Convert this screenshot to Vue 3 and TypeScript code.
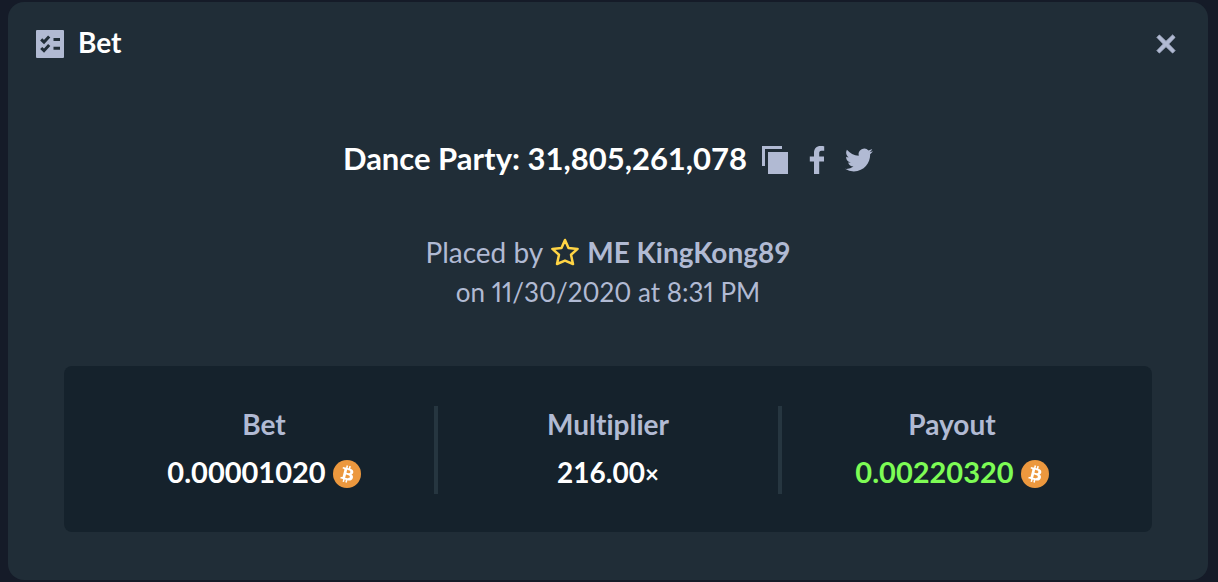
<script setup lang="ts">
interface Stat {
  label: string
  value: string
  unit?: string
  coin: boolean
  win?: boolean
}

const stats: Stat[] = [
  { label: 'Bet', value: '0.00001020', coin: true },
  { label: 'Multiplier', value: '216.00', unit: '×', coin: false },
  { label: 'Payout', value: '0.00220320', coin: true, win: true },
]
</script>

<template>
  <div class="backdrop">
    <main class="modal" role="dialog" aria-labelledby="modal-title">
      <header class="head">
        <svg class="icon" viewBox="0 0 28 28" aria-hidden="true">
          <rect width="28" height="28" rx="1" fill="currentColor" />
          <path class="tick" d="M5.2 9.3 8 12 13.2 6.4M5.2 18 8 20.7 13.2 15.1" />
          <path class="dash" d="M17.5 9.5H24M17.5 18.3H24" />
        </svg>
        <h1 id="modal-title">Bet</h1>
        <button class="icon-button close" type="button" aria-label="Close">
          <svg class="icon" viewBox="0 0 28 28" aria-hidden="true">
            <path class="cross" d="M5 7.4 7.4 5 14 11.4 20.6 5 23 7.4 16.6 14 23 20.6 20.6 23 14 16.6 7.4 23 5 20.6 11.4 14Z" />
          </svg>
        </button>
      </header>

      <section class="game">
        <h2>Dance Party: 31,805,261,078</h2>
        <button class="icon-button" type="button" aria-label="Copy bet">
          <svg class="icon" viewBox="0 0 28 28" aria-hidden="true">
            <path fill="currentColor" d="M1 0H21V3H4V20H1ZM7 6H27V28H7Z" />
          </svg>
        </button>
        <button class="icon-button" type="button" aria-label="Share on Facebook">
          <svg class="icon" viewBox="0 0 28 28" aria-hidden="true">
            <path fill="currentColor" d="M11 28V15.5H6.8V10.4H11V6.8C11 2.4 13.6 0 17.5 0 19.2 0 20.8.2 21.2.3V4.8H18.6C16.6 4.8 16.2 5.8 16.2 7.2V10.4H21V15.5H16.2V28Z" />
          </svg>
        </button>
        <button class="icon-button" type="button" aria-label="Share on Twitter">
          <svg class="icon" viewBox="0 0 24 24" aria-hidden="true">
            <path fill="currentColor" d="M23.95 4.57a10 10 0 0 1-2.82.77 4.96 4.96 0 0 0 2.16-2.72c-.95.55-2 .95-3.13 1.18a4.92 4.92 0 0 0-8.38 4.48C7.69 8.09 4.07 6.13 1.64 3.16a4.82 4.82 0 0 0-.67 2.48c0 1.71.87 3.21 2.19 4.1a4.9 4.9 0 0 1-2.23-.62v.06a4.92 4.92 0 0 0 3.95 4.83 5 5 0 0 1-2.21.08 4.94 4.94 0 0 0 4.6 3.42A9.87 9.87 0 0 1 0 19.54a13.99 13.99 0 0 0 7.55 2.21c9.05 0 14-7.5 14-13.98 0-.21 0-.42-.02-.63a9.94 9.94 0 0 0 2.46-2.55z" />
          </svg>
        </button>
      </section>

      <section class="placed">
        <p>
          Placed by
          <svg class="icon" viewBox="0 0 28 28" aria-hidden="true">
            <path class="star" d="M14 2 17.5 9.9 26.6 10.9 20 16.7 22 26 14 22.6 6 26 8 16.7 1.4 10.9 10.5 9.9Z" />
          </svg>
          <strong>ME KingKong89</strong>
        </p>
        <p class="date">on 11/30/2020 at 8:31 PM</p>
      </section>

      <dl class="stats">
        <div v-for="stat in stats" :key="stat.label" class="stat">
          <dt>{{ stat.label }}</dt>
          <dd :class="{ win: stat.win }">
            <span class="value" :class="{ multiplier: stat.unit }">{{ stat.value }}<span v-if="stat.unit" class="unit">{{ stat.unit }}</span></span>
            <svg v-if="stat.coin" class="icon" viewBox="0 0 32 32" aria-label="BTC">
              <circle cx="16" cy="16" r="16" fill="#ec983e" />
              <path fill="#fff" d="M23.189 14.02c.314-2.096-1.283-3.223-3.465-3.975l.708-2.84-1.728-.43-.69 2.765c-.454-.114-.92-.22-1.385-.326l.695-2.783L15.596 6l-.708 2.839c-.376-.086-.746-.17-1.104-.26l.002-.009-2.384-.595-.46 1.846s1.283.294 1.256.312c.7.175.826.638.805 1.006l-.806 3.235c.048.012.11.03.18.057l-.183-.045-1.13 4.532c-.086.212-.303.531-.793.41.018.025-1.256-.313-1.256-.313l-.858 1.978 2.25.561c.418.105.828.215 1.231.318l-.715 2.872 1.727.43.708-2.84c.472.127.93.245 1.378.357l-.706 2.828 1.728.43.715-2.866c2.948.558 5.164.333 6.097-2.333.752-2.146-.037-3.385-1.588-4.192 1.13-.26 1.98-1.003 2.207-2.538zm-3.95 5.538c-.533 2.147-4.148.986-5.32.695l.95-3.805c1.172.293 4.929.872 4.37 3.11zm.535-5.569c-.487 1.953-3.495.96-4.47.717l.86-3.45c.975.243 4.118.696 3.61 2.733z" />
            </svg>
          </dd>
        </div>
      </dl>
    </main>
  </div>
</template>

<style>
body {
  margin: 0;
  background: #151b28;
}
</style>

<style scoped>
.backdrop {
  box-sizing: border-box;
  min-height: 100vh;
  display: flex;
  padding: 2px 10px 2px 8px;
  background: #151b28;
  font-family: Lato, "Liberation Sans", sans-serif;
  font-size: 28px;
  line-height: 40px;
  font-variant-ligatures: none;
  color: #b1bad3;
}

.modal {
  box-sizing: border-box;
  flex: 1;
  padding: 20px 28px 48px;
  border-radius: 16px;
  background: #202d37;
}

h1,
h2,
p,
dl,
dd {
  margin: 0;
}

.icon {
  display: block;
  flex: none;
  width: 28px;
  height: 28px;
}

.icon-button {
  padding: 0;
  border: 0;
  background: none;
  color: inherit;
  cursor: pointer;
}

.head {
  display: flex;
  align-items: center;
  gap: 14px;
  height: 44px;
}

h1 {
  padding-bottom: 4px;
  font-size: 28px;
  font-weight: 700;
  color: #fff;
}

.close {
  margin-left: auto;
}

.tick,
.dash,
.star {
  fill: none;
}

.tick,
.dash {
  stroke: #202d37;
  stroke-width: 3;
}

.cross {
  fill: currentColor;
  stroke: currentColor;
  stroke-width: 1;
  stroke-linejoin: round;
}

.star {
  stroke: #ffd444;
  stroke-width: 2.5;
  stroke-linejoin: round;
}

.game {
  display: flex;
  justify-content: center;
  align-items: center;
  gap: 14px;
  margin-top: 72px;
}

h2 {
  padding-bottom: 4px;
  font-size: 31px;
  font-weight: 700;
  color: #fff;
}

.placed {
  margin-top: 50px;
  text-align: center;
}

.placed p {
  display: flex;
  justify-content: center;
  align-items: center;
  gap: 8px;
}

.placed .date {
  display: block;
  font-size: 26px;
  font-variant-numeric: proportional-nums;
}

.stats {
  display: grid;
  grid-template-columns: repeat(3, 1fr);
  margin: 54px 28px 0;
  padding: 40px 28px 38px;
  border-radius: 8px;
  background: #15222c;
}

.stat {
  height: 88px;
  text-align: center;
  font-weight: 700;
}

.stat + .stat {
  margin-left: -2px;
  padding-right: 2px;
  border-left: 4px solid #263640;
}

dt {
  height: 44px;
  line-height: 36px;
}

dd {
  display: flex;
  justify-content: center;
  align-items: center;
  gap: 7px;
  height: 48px;
  color: #fff;
}

.value {
  padding-bottom: 4px;
  font-size: 29px;
}

.multiplier {
  font-size: 28px;
}

.unit {
  font-size: 24px;
  line-height: 24px;
}

dd.win {
  color: #7dfc55;
}
</style>
